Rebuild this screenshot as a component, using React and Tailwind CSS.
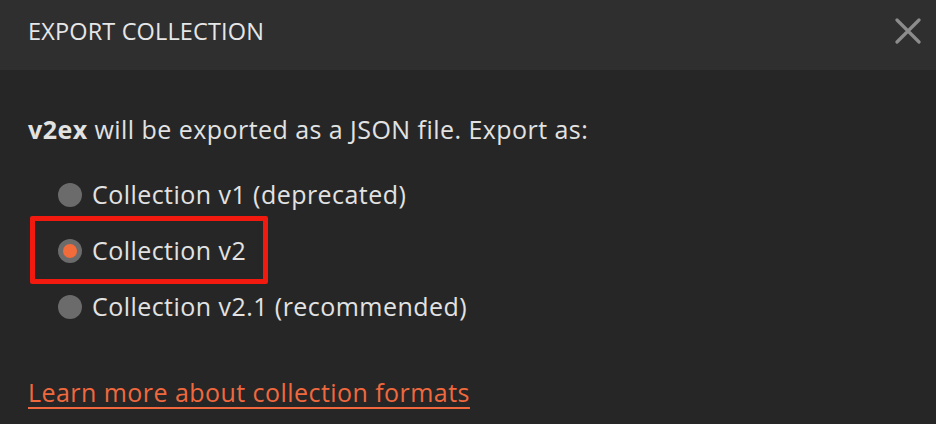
import React, { useState } from 'react';

const FORMATS = [
    { id: 'v1', label: 'Collection v1 (deprecated)' },
    { id: 'v2', label: 'Collection v2' },
    { id: 'v21', label: 'Collection v2.1 (recommended)' },
];

function Radio({ checked }) {
    return (
        <span className="flex h-6 w-6 shrink-0 items-center justify-center rounded-full bg-[#6b6b6b]">
            {checked && <span className="h-[14px] w-[14px] rounded-full bg-[#f26b3a]" />}
        </span>
    );
}

export default function App() {
    const [format, setFormat] = useState('v2');

    return (
        <div className="relative h-[424px] w-[936px] overflow-hidden bg-[#262626] font-['Open_Sans',sans-serif] text-[#e2e2e2]">
            <div className="flex h-[70px] items-center justify-between bg-[#2f2f2f] pb-2 pl-7 pr-3">
                <h2 className="text-[23.5px] leading-[30px] tracking-[0.15px] text-[#e6e6e6]">EXPORT COLLECTION</h2>
                <button className="flex h-8 w-8 items-center justify-center text-[#8c8c8c]">
                    <svg width="26" height="26" viewBox="0 0 26 26" fill="none" stroke="currentColor" strokeWidth="3.2" strokeLinecap="round">
                        <path d="M2 2 L24 24 M24 2 L2 24" />
                    </svg>
                </button>
            </div>

            <div className="px-7 pt-[43px] text-[25px] tracking-[0.45px]">
                <p className="leading-[32px]">
                    <span className="font-bold">v2ex</span> will be exported as a JSON file. Export as:
                </p>

                <div className="mt-[22px] flex flex-col pl-[30px]">
                    {FORMATS.map(f => (
                        <label
                            key={f.id}
                            onClick={() => setFormat(f.id)}
                            className="flex h-[56px] cursor-pointer items-center gap-[10px]"
                        >
                            <Radio checked={format === f.id} />
                            <span>{f.label}</span>
                        </label>
                    ))}
                </div>

                <a href="#" className="mt-[41px] inline-block leading-[32px] text-[#f0693e] underline underline-offset-[5px] decoration-[2px]">
                    Learn more about collection formats
                </a>
            </div>

            {/* red annotation box around the selected option */}
            <div className="pointer-events-none absolute left-[30px] top-[216px] h-[68px] w-[238px] rounded-[2px] border-[5px] border-[#f2190f]" />
        </div>
    );
}
